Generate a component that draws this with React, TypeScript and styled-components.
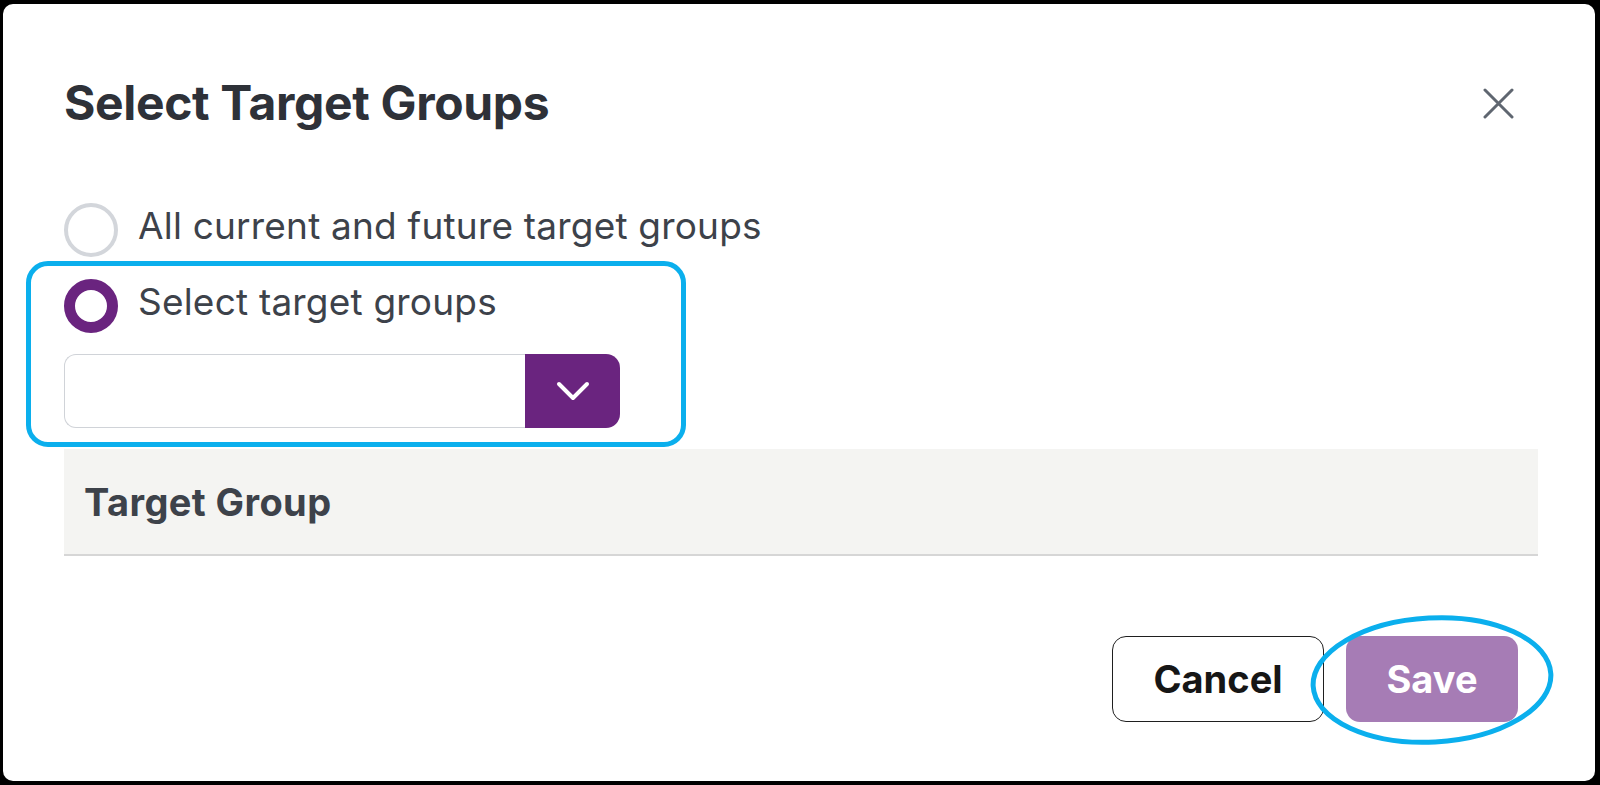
import React from "react";
import styled, { createGlobalStyle } from "styled-components";

const GlobalStyle = createGlobalStyle`
  html, body {
    margin: 0;
    padding: 0;
    background: #000;
    height: 100%;
  }
  body {
    font-family: Inter, "Open Sans", "Liberation Sans", sans-serif;
  }
  * { box-sizing: border-box; }
`;

const Frame = styled.div`
  width: 1600px;
  height: 785px;
  padding: 4px 5px 4px 3px;
  background: #000;
`;

const Modal = styled.div`
  position: relative;
  height: 100%;
  background: #fff;
  border-radius: 10px;
  padding: 70px 57px 0 61px;
  display: flex;
  flex-direction: column;
`;

const Header = styled.div`
  display: flex;
  align-items: center;
  justify-content: space-between;
  height: 58px;
  margin-right: 20px;
`;

const Title = styled.h1`
  margin: 0;
  font-size: 48px;
  line-height: 58px;
  font-weight: 700;
  color: #2e3138;
  letter-spacing: -0.35px;
`;

const CloseButton = styled.button`
  width: 40px;
  height: 40px;
  padding: 0;
  border: none;
  background: transparent;
  display: flex;
  align-items: center;
  justify-content: center;
  cursor: pointer;
`;

const Options = styled.div`
  margin-top: 71px;
  display: flex;
  flex-direction: column;
  gap: 22px;
`;

const RadioRow = styled.label`
  display: flex;
  align-items: flex-start;
  gap: 20px;
  cursor: pointer;
`;

const RadioCircle = styled.span<{ $checked?: boolean }>`
  flex: none;
  width: 54px;
  height: 54px;
  border-radius: 50%;
  border: ${(p) => (p.$checked ? "11px solid #6a247f" : "4px solid #d3d6db")};
  background: #fff;
`;

const RadioLabel = styled.span`
  font-size: 37px;
  line-height: 45px;
  color: #3d424a;
  font-weight: 400;
  letter-spacing: 0.2px;
`;

const SelectBox = styled.div`
  margin-top: 21px;
  width: 556px;
  height: 74px;
  display: flex;
`;

const SelectInput = styled.div`
  flex: 1;
  border: 1.5px solid #d0d3d8;
  border-right: none;
  border-radius: 12px 0 0 12px;
  background: #fff;
`;

const SelectToggle = styled.button`
  width: 95px;
  height: 100%;
  border: none;
  padding: 0;
  background: #6a247f;
  border-radius: 0 14px 14px 0;
  display: flex;
  align-items: center;
  justify-content: center;
  cursor: pointer;
`;

const Table = styled.div`
  margin-top: 21px;
  display: flex;
  flex-direction: column;
`;

const TableHead = styled.div`
  height: 107px;
  background: #f4f4f2;
  border-bottom: 2px solid #d6d6d6;
  display: flex;
  align-items: center;
  padding-left: 20px;
`;

const HeadCell = styled.span`
  font-size: 38px;
  font-weight: 700;
  color: #3d424a;
  letter-spacing: 0.4px;
`;

const Footer = styled.div`
  margin-top: 80px;
  margin-right: 20px;
  display: flex;
  justify-content: flex-end;
  gap: 22px;
`;

const Button = styled.button<{ $primary?: boolean }>`
  height: 86px;
  padding: 0;
  width: ${(p) => (p.$primary ? "172px" : "212px")};
  border-radius: 14px;
  font-family: Inter, "Open Sans", sans-serif;
  font-size: 38px;
  font-weight: 700;
  cursor: pointer;
  border: ${(p) => (p.$primary ? "none" : "1.5px solid #1f1f1f")};
  background: ${(p) => (p.$primary ? "#a67cb5" : "#fff")};
  color: ${(p) => (p.$primary ? "#fff" : "#161616")};
`;

const HighlightBox = styled.div`
  position: absolute;
  left: 23px;
  top: 257px;
  width: 660px;
  height: 186px;
  border: 5px solid #0bafed;
  border-radius: 22px;
  pointer-events: none;
`;

const HighlightEllipse = styled.svg`
  position: absolute;
  left: 1304px;
  top: 608px;
  pointer-events: none;
`;

export default function App() {
  return (
    <>
      <GlobalStyle />
      <Frame>
        <Modal>
          <Header>
            <Title>Select Target Groups</Title>
            <CloseButton aria-label="Close">
              <svg width="31" height="31" viewBox="0 0 31 31">
                <path
                  d="M2 2 L29 29 M29 2 L2 29"
                  stroke="#5f6670"
                  strokeWidth="3"
                  strokeLinecap="round"
                  fill="none"
                />
              </svg>
            </CloseButton>
          </Header>

          <Options>
            <RadioRow>
              <RadioCircle />
              <RadioLabel>All current and future target groups</RadioLabel>
            </RadioRow>
            <RadioRow>
              <RadioCircle $checked />
              <RadioLabel>Select target groups</RadioLabel>
            </RadioRow>
          </Options>

          <SelectBox>
            <SelectInput />
            <SelectToggle aria-label="Open">
              <svg width="34" height="20" viewBox="0 0 34 20">
                <path
                  d="M3 3 L17 17 L31 3"
                  stroke="#fff"
                  strokeWidth="4"
                  strokeLinecap="round"
                  strokeLinejoin="round"
                  fill="none"
                />
              </svg>
            </SelectToggle>
          </SelectBox>

          <Table>
            <TableHead>
              <HeadCell>Target Group</HeadCell>
            </TableHead>
          </Table>

          <Footer>
            <Button>Cancel</Button>
            <Button $primary>Save</Button>
          </Footer>

          <HighlightBox />
          <HighlightEllipse width="250" height="136" viewBox="0 0 250 136">
            <ellipse
              cx="125"
              cy="68"
              rx="119"
              ry="62"
              fill="none"
              stroke="#0bafed"
              strokeWidth="5"
              transform="rotate(-3 125 68)"
            />
          </HighlightEllipse>
        </Modal>
      </Frame>
    </>
  );
}
